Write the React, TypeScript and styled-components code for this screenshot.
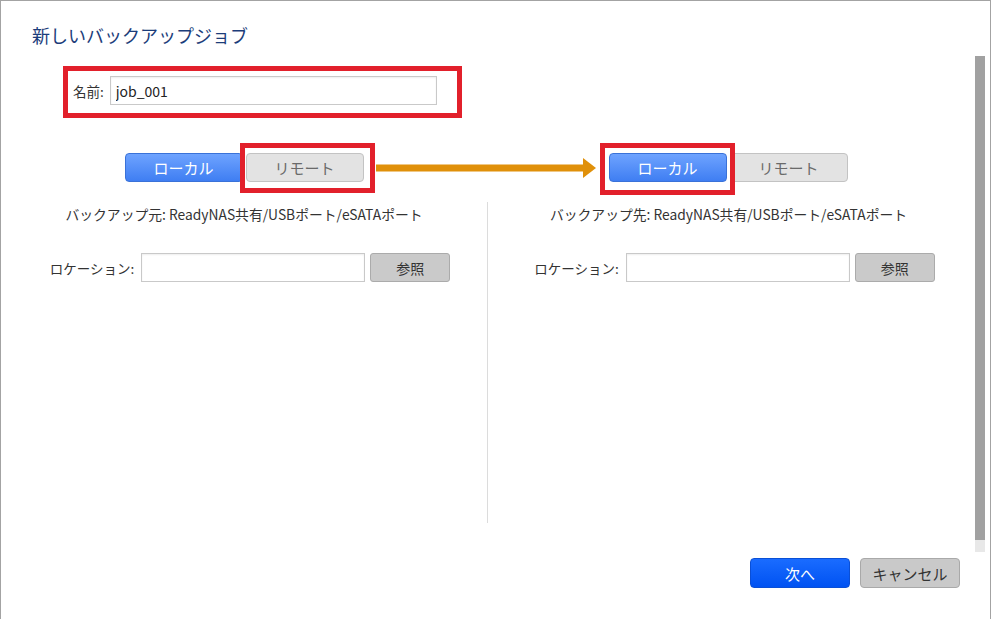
import React from "react";
import styled, { createGlobalStyle } from "styled-components";

const FONT = `"Noto Sans CJK JP", "Noto Sans", "Liberation Sans", sans-serif`;

const GlobalStyle = createGlobalStyle`
  html, body {
    margin: 0;
    padding: 0;
    background: #fff;
  }
  body {
    font-family: ${FONT};
    color: #333;
  }
`;

const Dialog = styled.div`
  box-sizing: border-box;
  width: 991px;
  height: 619px;
  display: flex;
  border: 1px solid #a3a3a3;
  border-bottom: none;
  background: #fff;
  overflow: hidden;
`;

const Main = styled.div`
  flex: 1;
  display: flex;
  flex-direction: column;
`;

const Title = styled.h1`
  margin: 22px 0 0 31px;
  font-size: 18px;
  line-height: 24px;
  font-weight: normal;
  color: #1c3d7a;
`;

const NameBox = styled.div`
  box-sizing: border-box;
  width: 399px;
  margin: 19px 0 0 62px;
  display: flex;
  align-items: center;
  gap: 6px;
  border: 5px solid #e2202b;
  padding: 5px 20px 8px 5px;
`;

const Label = styled.label`
  font-size: 13.5px;
  color: #333;
  white-space: nowrap;
`;

const TextInput = styled.input<{ $width?: number }>`
  box-sizing: border-box;
  ${(p) => (p.$width ? `width: ${p.$width}px;` : "flex: 1; min-width: 0;")}
  height: 29px;
  border: 1px solid #c9c9c9;
  box-shadow: inset 0 1px 2px rgba(0, 0, 0, 0.07);
  padding: 0 5px;
  font: 14px ${FONT};
  color: #222;
  outline: none;
`;

const Columns = styled.div`
  display: grid;
  grid-template-columns: 486px 482px;
`;

const ToggleRow = styled(Columns)`
  position: relative;
  margin-top: 35px;
  height: 29px;
`;

const ToggleGroup = styled.div`
  justify-self: center;
  display: flex;
  gap: 3px;
`;

const Highlight = styled.span<{ $inset: string }>`
  position: relative;
  display: inline-flex;
  &::after {
    content: "";
    position: absolute;
    inset: ${(p) => p.$inset};
    border: 5px solid #e2202b;
    pointer-events: none;
  }
`;

const SegButton = styled.button<{ $active?: boolean }>`
  box-sizing: border-box;
  width: 118px;
  height: 29px;
  border-radius: 4px;
  border: 1px solid ${(p) => (p.$active ? "#3a72d8" : "#c3c3c3")};
  background: ${(p) =>
    p.$active ? "linear-gradient(#6ea3ff, #3f7ef2)" : "#e3e3e3"};
  color: ${(p) => (p.$active ? "#fff" : "#6a6a6a")};
  font: 15px ${FONT};
  padding: 0;
`;

const Arrow = styled.svg`
  position: absolute;
  left: 375px;
  top: 4px;
`;

const Panels = styled(Columns)`
  margin-top: 20px;
  height: 321px;
`;

const Panel = styled.div<{ $divider?: boolean }>`
  display: flex;
  flex-direction: column;
  align-items: center;
  padding-top: 2px;
  ${(p) => (p.$divider ? "border-left: 1px solid #dcdcdc;" : "")}
`;

const Description = styled.div`
  font-size: 13.8px;
  line-height: 20px;
  color: #333;
  white-space: nowrap;
`;

const LocationRow = styled.div`
  display: flex;
  align-items: center;
  margin-top: 29px;
  padding-left: 12px;
  gap: 5px;
  ${Label} {
    margin-right: 2px;
  }
`;

const BrowseButton = styled.button`
  box-sizing: border-box;
  width: 80px;
  height: 29px;
  border-radius: 3px;
  border: 1px solid #ababab;
  background: #cacaca;
  color: #333;
  font: 14px ${FONT};
  padding: 0;
`;

const Footer = styled.div`
  display: flex;
  justify-content: flex-end;
  gap: 10px;
  margin-top: 35px;
  padding-right: 15px;
`;

const ActionButton = styled.button<{ $primary?: boolean }>`
  box-sizing: border-box;
  width: 100px;
  height: 30px;
  border-radius: 4px;
  border: 1px solid ${(p) => (p.$primary ? "#0a4fd6" : "#a9a9a9")};
  background: ${(p) =>
    p.$primary ? "linear-gradient(#1a6cff, #0052f2)" : "#c9c9c9"};
  color: ${(p) => (p.$primary ? "#fff" : "#333")};
  font: 15px ${FONT};
  padding: 0;
`;

const ScrollTrack = styled.div`
  width: 10px;
  height: 496px;
  margin: 55px 5px 0 0;
  background: #e8e8e8;
`;

const ScrollThumb = styled.div`
  height: 484px;
  background: #a1a1a1;
`;

const LocationField: React.FC = () => (
  <LocationRow>
    <Label>ロケーション:</Label>
    <TextInput $width={224} />
    <BrowseButton>参照</BrowseButton>
  </LocationRow>
);

export default function App() {
  return (
    <>
      <GlobalStyle />
      <Dialog>
        <Main>
          <Title>新しいバックアップジョブ</Title>
          <NameBox>
            <Label>名前:</Label>
            <TextInput defaultValue="job_001" />
          </NameBox>

          <ToggleRow>
            <ToggleGroup>
              <SegButton $active>ローカル</SegButton>
              <Highlight $inset="-10px -11px -11px -6px">
                <SegButton>リモート</SegButton>
              </Highlight>
            </ToggleGroup>
            <ToggleGroup>
              <Highlight $inset="-10px -8px -13px -9px">
                <SegButton $active>ローカル</SegButton>
              </Highlight>
              <SegButton>リモート</SegButton>
            </ToggleGroup>
            <Arrow width="221" height="22" viewBox="0 0 221 22">
              <rect x="0" y="7.5" width="208" height="7" fill="#e0900a" />
              <polygon points="207,1 220,11 207,21" fill="#e0900a" />
            </Arrow>
          </ToggleRow>

          <Panels>
            <Panel>
              <Description>
                バックアップ元: ReadyNAS共有/USBポート/eSATAポート
              </Description>
              <LocationField />
            </Panel>
            <Panel $divider>
              <Description>
                バックアップ先: ReadyNAS共有/USBポート/eSATAポート
              </Description>
              <LocationField />
            </Panel>
          </Panels>

          <Footer>
            <ActionButton $primary>次へ</ActionButton>
            <ActionButton>キャンセル</ActionButton>
          </Footer>
        </Main>
        <ScrollTrack>
          <ScrollThumb />
        </ScrollTrack>
      </Dialog>
    </>
  );
}
